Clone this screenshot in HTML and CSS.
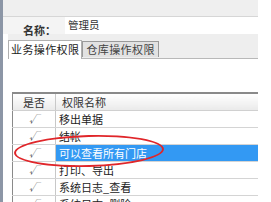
FILE: index.html
```html
<!DOCTYPE html>
<html lang="zh-CN">
<head>
    <meta charset="UTF-8">
    <title>权限设置</title>
    <link rel="stylesheet" href="styles.css">
</head>
<body>
    <div class="window">
        <div class="top-bar"></div>

        <div class="name-row">
            <label class="name-label">名称：</label>
            <div class="name-input">管理员</div>
        </div>

        <!-- 选项卡 -->
        <div class="tabs">
            <div class="tab active">业务操作权限</div>
            <div class="tab">仓库操作权限</div>
        </div>

        <div class="tab-page">
            <table class="perm-table">
                <thead>
                    <tr><th class="col-check">是否</th><th class="col-name">权限名称</th></tr>
                </thead>
                <tbody>
                    <tr><td class="col-check">√</td><td>移出单据</td></tr>
                    <tr><td class="col-check">√</td><td>结帐</td></tr>
                    <tr class="selected"><td class="col-check">√</td><td>可以查看所有门店</td></tr>
                    <tr><td class="col-check">√</td><td>打印、导出</td></tr>
                    <tr><td class="col-check">√</td><td>系统日志_查看</td></tr>
                    <tr><td class="col-check">√</td><td>系统日志_删除</td></tr>
                </tbody>
            </table>
            <div class="highlight"></div>
        </div>
    </div>
</body>
</html>
```

FILE: styles.css
```css
/* Estilos generales */
body {
    margin: 0;
    background: #fff;
    font-family: "Noto Sans CJK SC", "Liberation Sans", sans-serif;
    font-size: 11px;
    color: #222;
    overflow: hidden;
}

.window {
    position: relative;
    width: 271px;
    height: 202px;
    overflow: hidden;
    border-left: 3px solid #8c96a6;
    box-sizing: border-box;
}

.top-bar {
    width: 255px;
    height: 16px;
    background: #efefef;
    border-bottom: 1px solid #d6d6d6;
}

/* Fila del nombre */
.name-row {
    display: flex;
    align-items: flex-start;
    width: 255px;
    height: 17px;
    background: #f4f4f4;
}

.name-label {
    width: 62px;
    padding-left: 20px;
    box-sizing: border-box;
    margin-top: 7px;
    font-weight: bold;
    font-size: 11px;
    line-height: 13px;
    color: #333;
}

.name-input {
    flex: 1;
    height: 17px;
    box-sizing: border-box;
    padding-left: 3px;
    background: #fff;
    line-height: 15px;
    font-size: 10.5px;
    color: #333;
}

/* Pestañas */
.tabs {
    display: flex;
    align-items: flex-end;
    margin-left: 5px;
    width: 250px;
    height: 24px;
    background: #eeeeee;
    border-bottom: 1px solid #b8b8b8;
}

.tab {
    height: 15px;
    padding: 0 3px;
    margin-bottom: 1px;
    border: 1px solid #9a9a9a;
    border-bottom: none;
    background: #e2e2e2;
    line-height: 15px;
    color: #444;
    letter-spacing: 0.4px;
}

.tab.active {
    height: 18px;
    margin-bottom: -1px;
    padding: 0 2px;
    background: #fff;
    color: #222;
    line-height: 17px;
    border-color: #b0b0b0;
}

.tab-page {
    position: relative;
    margin-left: 5px;
    width: 250px;
    padding-top: 33px;
}

/* Tabla de permisos */
.perm-table {
    margin-left: 4px;
    width: 246px;
    border-collapse: collapse;
    border-left: 1px solid #8a8a8a;
    border-top: 2px solid #8a8a8a;
}

.perm-table th {
    height: 16px;
    padding: 0;
    font-weight: normal;
    text-align: left;
    background: linear-gradient(#ffffff, #eaeaea);
    border-bottom: 1px solid #d0d0d0;
    color: #333;
}

.perm-table th.col-check {
    width: 42px;
    text-align: center;
    border-right: 1px solid #c8c8c8;
}

.perm-table th.col-name {
    padding-left: 6px;
}

.perm-table td {
    height: 16px;
    padding: 0 0 0 3px;
    border-bottom: 1px solid #d4d4d4;
    line-height: 16px;
    color: #222;
}

.perm-table td.col-check {
    width: 42px;
    padding: 0;
    text-align: center;
    border-right: 1px solid #c8c8c8;
    color: #555;
    font-style: italic;
    font-size: 10px;
}

.perm-table tr.selected td:last-child {
    background: #3399f3;
    color: #fff;
}

/* Círculo rojo de resaltado */
.highlight {
    position: absolute;
    left: 6px;
    top: 76px;
    width: 146px;
    height: 28px;
    border: 2px solid #e0262a;
    border-radius: 50%;
    transform: rotate(-1.5deg);
}
```
